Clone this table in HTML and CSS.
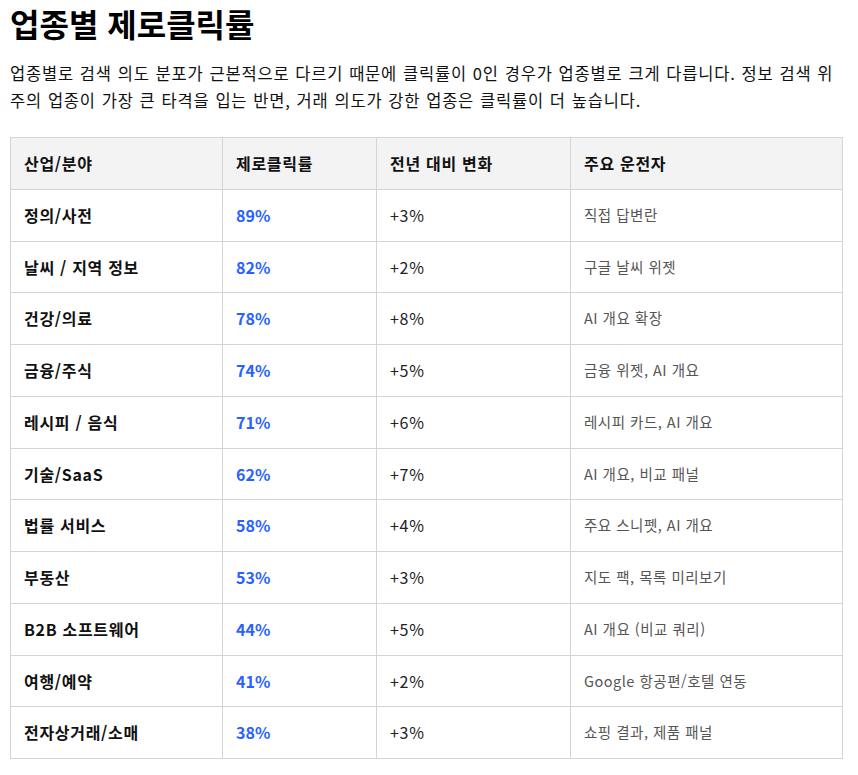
FILE: index.html
```html
<!DOCTYPE html>
<html lang="ko">
<head>
<meta charset="utf-8">
<title>업종별 제로클릭률</title>
<link rel="stylesheet" href="styles.css">
</head>
<body>
<main class="page">
  <h1 class="title">업종별 제로클릭률</h1>
  <p class="intro">업종별로 검색 의도 분포가 근본적으로 다르기 때문에 클릭률이 0인 경우가 업종별로 크게 다릅니다. 정보 검색 위주의 업종이 가장 큰 타격을 입는 반면, 거래 의도가 강한 업종은 클릭률이 더 높습니다.</p>
  <table class="data">
    <thead>
      <tr><th class="c1">산업/분야</th><th class="c2">제로클릭률</th><th class="c3">전년 대비 변화</th><th class="c4">주요 운전자</th></tr>
    </thead>
    <tbody>
      <tr><td class="name">정의/사전</td><td class="rate">89%</td><td class="chg">+3%</td><td class="drv">직접 답변란</td></tr>
      <tr><td class="name">날씨 / 지역 정보</td><td class="rate">82%</td><td class="chg">+2%</td><td class="drv">구글 날씨 위젯</td></tr>
      <tr><td class="name">건강/의료</td><td class="rate">78%</td><td class="chg">+8%</td><td class="drv">AI 개요 확장</td></tr>
      <tr><td class="name">금융/주식</td><td class="rate">74%</td><td class="chg">+5%</td><td class="drv">금융 위젯, AI 개요</td></tr>
      <tr><td class="name">레시피 / 음식</td><td class="rate">71%</td><td class="chg">+6%</td><td class="drv">레시피 카드, AI 개요</td></tr>
      <tr><td class="name">기술/SaaS</td><td class="rate">62%</td><td class="chg">+7%</td><td class="drv">AI 개요, 비교 패널</td></tr>
      <tr><td class="name">법률 서비스</td><td class="rate">58%</td><td class="chg">+4%</td><td class="drv">주요 스니펫, AI 개요</td></tr>
      <tr><td class="name">부동산</td><td class="rate">53%</td><td class="chg">+3%</td><td class="drv">지도 팩, 목록 미리보기</td></tr>
      <tr><td class="name">B2B 소프트웨어</td><td class="rate">44%</td><td class="chg">+5%</td><td class="drv">AI 개요 (비교 쿼리)</td></tr>
      <tr><td class="name">여행/예약</td><td class="rate">41%</td><td class="chg">+2%</td><td class="drv">Google 항공편/호텔 연동</td></tr>
      <tr><td class="name">전자상거래/소매</td><td class="rate">38%</td><td class="chg">+3%</td><td class="drv">쇼핑 결과, 제품 패널</td></tr>
    </tbody>
  </table>
</main>
</body>
</html>
```

FILE: styles.css
```css
* { box-sizing: border-box; }

html, body {
  margin: 0;
  padding: 0;
  background: #ffffff;
}

body {
  font-family: "Noto Sans CJK KR", "Noto Sans", "Liberation Sans", sans-serif;
  color: #111111;
}

.page {
  width: 832px;
  margin: 0 0 0 10px;
  padding: 0;
}

.title {
  margin: 0;
  font-size: 32px;
  line-height: 46px;
  font-weight: 700;
  color: #000000;
}

.intro {
  margin: 14px 0 0 0;
  font-size: 16.5px;
  line-height: 27px;
  letter-spacing: 0.8px;
  word-spacing: 0.5px;
  color: #111111;
}

.data {
  margin-top: 23px;
  width: 832px;
  border-collapse: collapse;
  table-layout: fixed;
  font-size: 16px;
  letter-spacing: 0.7px;
}

.data th,
.data td {
  border: 1px solid #d4d4d4;
  padding: 14px 13px;
  line-height: 22.75px;
  text-align: left;
  vertical-align: middle;
}

.data th {
  background: #f3f3f3;
  font-weight: 700;
  color: #111111;
}

.c1 { width: 212px; }
.c2 { width: 154px; }
.c3 { width: 194px; }
.c4 { width: 272px; }

.name {
  font-weight: 700;
  color: #111111;
}

.rate {
  font-weight: 700;
  letter-spacing: 0;
  color: #2962ff;
}

.chg {
  color: #222222;
}

.drv {
  font-size: 14.5px;
  letter-spacing: 0.5px;
  color: #555555;
}
```
